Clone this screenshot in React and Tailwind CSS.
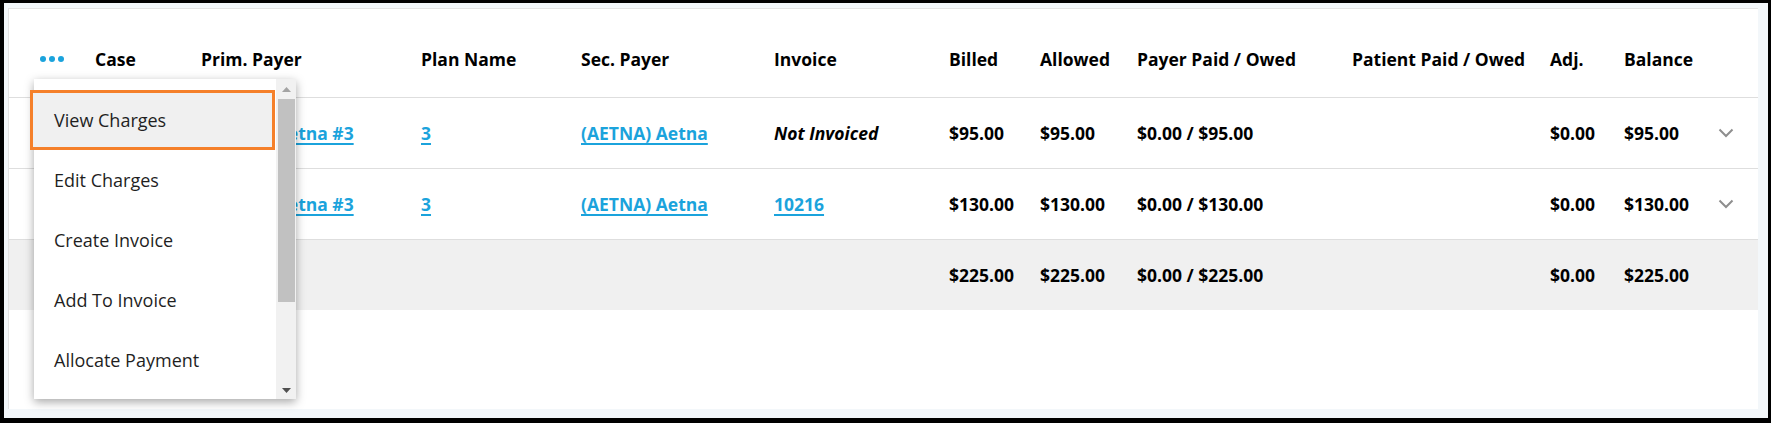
import React from "react";

const cols =
  "grid grid-cols-[86px_106px_220px_160px_193px_175px_91px_97px_215px_198px_74px_94px_1fr] items-center";

const rows = [
  {
    prim: "(AETNA) Aetna #3",
    plan: "3",
    sec: "(AETNA) Aetna",
    invoice: null,
    billed: "$95.00",
    allowed: "$95.00",
    payer: "$0.00 / $95.00",
    adj: "$0.00",
    balance: "$95.00",
  },
  {
    prim: "(AETNA) Aetna #3",
    plan: "3",
    sec: "(AETNA) Aetna",
    invoice: "10216",
    billed: "$130.00",
    allowed: "$130.00",
    payer: "$0.00 / $130.00",
    adj: "$0.00",
    balance: "$130.00",
  },
];

const menuItems = ["View Charges", "Edit Charges", "Create Invoice", "Add To Invoice", "Allocate Payment"];

const Link = ({ children }) => (
  <a
    href="#"
    className="text-[#1ba3dc] font-bold underline underline-offset-[3px] decoration-[1.5px] whitespace-nowrap"
  >
    {children}
  </a>
);

const Chevron = () => (
  <svg width="16" height="10" viewBox="0 0 16 10" fill="none">
    <polyline points="1.5,1.5 8,8 14.5,1.5" stroke="#8e8e8e" strokeWidth="2" />
  </svg>
);

const Dots = () => (
  <div className="flex gap-[3px] items-center">
    <span className="w-[6px] h-[6px] rounded-full bg-[#1ba3dc]" />
    <span className="w-[6px] h-[6px] rounded-full bg-[#1ba3dc]" />
    <span className="w-[6px] h-[6px] rounded-full bg-[#1ba3dc]" />
  </div>
);

const ActionMenu = () => (
  <div className="absolute left-[25px] top-[70px] w-[262px] h-[320px] bg-white flex shadow-[0_3px_9px_rgba(0,0,0,0.35)] text-[18px]">
    <ul className="flex-1 pt-[11px]">
      {menuItems.map((item, i) =>
        i === 0 ? (
          <li
            key={item}
            className="-ml-[4px] w-[245px] h-[60px] flex items-center pl-[21px] border-[3px] border-[#f5802a] bg-[#f0f0f0] text-[#1f1f1f]"
          >
            {item}
          </li>
        ) : (
          <li key={item} className="h-[60px] flex items-center pl-[20px] text-[#1f1f1f]">
            {item}
          </li>
        )
      )}
    </ul>
    {/* scrollbar */}
    <div className="w-[20px] bg-[#f1f1f1] flex flex-col">
      <div className="h-[20px] flex items-center justify-center">
        <svg width="9" height="5" viewBox="0 0 9 5">
          <polygon points="0,5 4.5,0 9,5" fill="#a3a3a3" />
        </svg>
      </div>
      <div className="ml-[2px] mr-[1px] h-[203px] bg-[#c1c1c1]" />
      <div className="flex-1" />
      <div className="h-[20px] flex items-center justify-center pt-[3px]">
        <svg width="9" height="5" viewBox="0 0 9 5">
          <polygon points="0,0 4.5,5 9,0" fill="#505050" />
        </svg>
      </div>
    </div>
  </div>
);

export default function App() {
  return (
    <div className="w-[1771px] h-[423px] border-black border-t-[3px] border-l-[4px] border-r-[3px] border-b-[5px] bg-[#f3f7fa] pt-[5px] pl-[4px] pr-[10px] pb-[9px] font-['Open_Sans',sans-serif] text-[17.5px] leading-[24px] text-black">
      <div className="relative h-full bg-white border-t border-l border-[#e3e3e3]">
        {/* header */}
        <div className={cols + " h-[88px] pt-[38px] pb-[26px] font-bold items-start"}>
          <div className="pl-[31px] h-[24px] flex items-center">
            <Dots />
          </div>
          <div>Case</div>
          <div>Prim. Payer</div>
          <div>Plan Name</div>
          <div>Sec. Payer</div>
          <div>Invoice</div>
          <div>Billed</div>
          <div>Allowed</div>
          <div>Payer Paid / Owed</div>
          <div>Patient Paid / Owed</div>
          <div>Adj.</div>
          <div>Balance</div>
          <div />
        </div>

        {rows.map((r, i) => (
          <div key={i} className={cols + " h-[71px] border-t border-[#dedede] font-bold"}>
            <div />
            <div />
            <div>
              <Link>{r.prim}</Link>
            </div>
            <div>
              <Link>{r.plan}</Link>
            </div>
            <div>
              <Link>{r.sec}</Link>
            </div>
            <div>
              {r.invoice ? <Link>{r.invoice}</Link> : <span className="italic">Not Invoiced</span>}
            </div>
            <div>{r.billed}</div>
            <div>{r.allowed}</div>
            <div>{r.payer}</div>
            <div />
            <div>{r.adj}</div>
            <div>{r.balance}</div>
            <div className="flex items-center">
              <Chevron />
            </div>
          </div>
        ))}

        {/* totals */}
        <div className={cols + " h-[71px] border-t border-[#dedede] bg-[#f0f0f0] font-bold"}>
          <div />
          <div />
          <div />
          <div />
          <div />
          <div />
          <div>$225.00</div>
          <div>$225.00</div>
          <div>$0.00 / $225.00</div>
          <div />
          <div>$0.00</div>
          <div>$225.00</div>
          <div />
        </div>

        <ActionMenu />
      </div>
    </div>
  );
}
